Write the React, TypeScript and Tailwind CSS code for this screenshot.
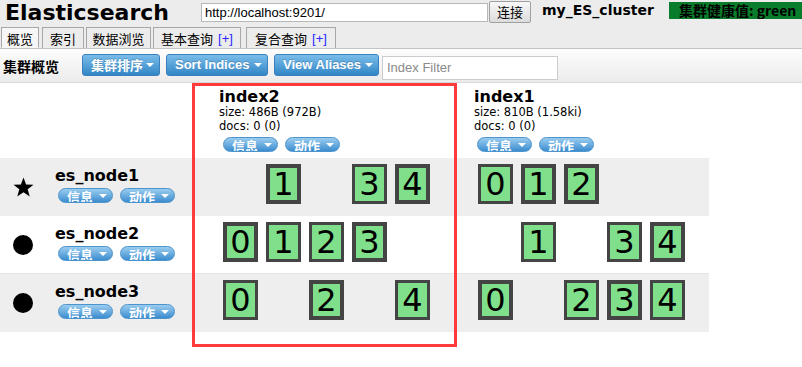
import React from "react";

const DV = "font-['DejaVu_Sans','Noto_Sans_CJK_SC',sans-serif]";
const LS = "font-['Liberation_Sans','Noto_Sans_CJK_SC',sans-serif]";
const CJK = "font-['Noto_Sans_CJK_SC',sans-serif]";

function Caret() {
  return (
    <span className="block w-0 h-0 border-x-[4px] border-x-transparent border-t-[4px] border-t-white" />
  );
}

function ToolButton({ label, w, cjk }: { label: string; w: string; cjk?: boolean }) {
  return (
    <div
      className={`h-[22px] ${w} shrink-0 rounded-[3px] border border-[#3a80bd] bg-gradient-to-b from-[#79bdea] to-[#3186c6] flex items-center justify-between pl-[8px] pr-[5px]`}
    >
      <span
        className={`${cjk ? CJK : LS} text-white font-bold text-[13px] leading-[16px] [text-shadow:0_-1px_0_rgba(0,0,0,0.2)]`}
      >
        {label}
      </span>
      <Caret />
    </div>
  );
}

function Pill({ label }: { label: string }) {
  return (
    <div className="h-[15px] w-[55px] shrink-0 rounded-full overflow-hidden border border-[#4d93cc] bg-gradient-to-b from-[#9acdef] to-[#3a8dcf] flex items-start pl-[8px]">
      <span className={`${CJK} text-white font-bold text-[13px] leading-[13px] mt-[1px]`}>{label}</span>
      <span className="ml-[6px] mt-[5px]">
        <Caret />
      </span>
    </div>
  );
}

type S = { n: number; p: boolean } | null;

function Shard({ s }: { s: S }) {
  if (!s) return <div className="w-[35px] h-[40px] shrink-0" />;
  return (
    <div
      className={`w-[35px] h-[40px] shrink-0 box-border ${s.p ? "border-4" : "border-[3px]"} border-[#444444] bg-[#80df8a] flex items-center justify-center ${DV} text-[32px] leading-none text-black`}
    >
      {s.n}
    </div>
  );
}

function slots(list: [number, boolean][]): S[] {
  const arr: S[] = [null, null, null, null, null];
  list.forEach(([n, p]) => (arr[n] = { n, p }));
  return arr;
}

const rows = [
  {
    name: "es_node1",
    icon: "star",
    bg: "bg-[#eeeeee]",
    i2: slots([[1, true], [3, false], [4, true]]),
    i1: slots([[0, false], [1, true], [2, true]]),
  },
  {
    name: "es_node2",
    icon: "dot",
    bg: "bg-white border-b border-[#e4e4e4]",
    i2: slots([[0, true], [1, false], [2, false], [3, true]]),
    i1: slots([[1, false], [3, false], [4, true]]),
  },
  {
    name: "es_node3",
    icon: "dot",
    bg: "bg-[#eeeeee]",
    i2: slots([[0, false], [2, true], [4, false]]),
    i1: slots([[0, true], [2, false], [3, true], [4, false]]),
  },
];

function Tab({ label, plus, w, active, ml }: { label: string; plus?: boolean; w: string; active?: boolean; ml: string }) {
  return (
    <div
      className={`${w} ${ml} h-[21px] shrink-0 border border-[#a8a8a8] ${active ? "border-b-[#f6f6f6] bg-[#f6f6f6]" : "border-b-0 bg-[#ececec]"} flex items-start justify-center pt-[3px] ${CJK} text-[13px] leading-[16px] text-black`}
    >
      <span>{label}</span>
      {plus && <span className={`${LS} text-[#2a2aff] ml-[5px]`}>[+]</span>}
    </div>
  );
}

function IndexHeader({ name, size, docs, pl, pillMl }: { name: string; size: string; docs: string; pl: string; pillMl: string }) {
  return (
    <div className={`${pl} pt-[5px] flex flex-col ${DV} text-black`}>
      <div className="font-bold text-[16px] leading-[17px]">{name}</div>
      <div className="text-[11.5px] leading-[14px]">{size}</div>
      <div className="text-[11.5px] leading-[14px]">{docs}</div>
      <div className={`flex gap-[7px] mt-[4px] ${pillMl}`}>
        <Pill label="信息" />
        <Pill label="动作" />
      </div>
    </div>
  );
}

export default function App() {
  return (
    <div className={`relative w-[802px] h-[367px] overflow-hidden bg-white ${DV}`}>
      {/* header */}
      <div className="h-[49px] bg-[#ececec] border-b border-[#c4c4c4] flex flex-col">
        <div className="h-[27px] flex items-start">
          <div className="w-[201px] shrink-0 pl-[5px] font-bold text-[22px] leading-[26px] text-black">Elasticsearch</div>
          <div className={`w-[287px] h-[19px] mt-[3px] shrink-0 bg-white border border-[#b8b8b8] ${LS} text-[13px] leading-[17px] pl-[3px] text-black`}>
            http://localhost:9201/
          </div>
          <div className={`w-[42px] h-[22px] ml-[1px] mt-[1px] shrink-0 border border-[#a0a0a0] rounded-[2px] bg-gradient-to-b from-[#f8f8f8] to-[#dcdcdc] flex items-center justify-center ${CJK} text-[13px] leading-[16px] text-black`}>
            连接
          </div>
          <div className="w-[138px] shrink-0 pl-[11px] mt-[1px] font-bold text-[14px] leading-[18px] text-black whitespace-nowrap">my_ES_cluster</div>
          <div className={`flex-1 min-w-0 h-[17px] mt-[2px] bg-[#0a7d2c] pl-[10px] ${CJK} font-bold text-[14px] leading-[17px] text-black whitespace-nowrap overflow-hidden`}>
            集群健康值: green
          </div>
        </div>
        <div className="h-[21px] flex items-end">
          <Tab label="概览" w="w-[38px]" ml="ml-[1px]" active />
          <Tab label="索引" w="w-[42px]" ml="ml-[3px]" />
          <Tab label="数据浏览" w="w-[65px]" ml="ml-[2px]" />
          <Tab label="基本查询" plus w="w-[88px]" ml="ml-[2px]" />
          <Tab label="复合查询" plus w="w-[90px]" ml="ml-[5px]" />
        </div>
      </div>

      {/* toolbar */}
      <div className="h-[34px] bg-gradient-to-b from-[#fdfdfd] to-[#ececec] border-b border-[#d8d8d8] flex items-start">
        <div className={`w-[82px] shrink-0 pl-[3px] mt-[9px] ${CJK} font-bold text-[14px] leading-[16px] text-black`}>集群概览</div>
        <div className="mt-[5px]">
          <ToolButton label="集群排序" w="w-[78px]" cjk />
        </div>
        <div className="mt-[5px] ml-[6px]">
          <ToolButton label="Sort Indices" w="w-[102px]" />
        </div>
        <div className="mt-[5px] ml-[6px]">
          <ToolButton label="View Aliases" w="w-[105px]" />
        </div>
        <div className={`ml-[3px] mt-[7px] w-[176px] h-[24px] shrink-0 bg-white border border-[#cccccc] pl-[4px] ${LS} text-[13px] leading-[22px] text-[#8a8a8a]`}>
          Index Filter
        </div>
      </div>

      {/* cluster table */}
      <div className="w-[709px] flex flex-col">
        <div className="h-[75px] flex">
          <div className="w-[214px] shrink-0" />
          <div className="w-[256px] shrink-0">
            <IndexHeader name="index2" size="size: 486B (972B)" docs="docs: 0 (0)" pl="pl-[5px]" pillMl="ml-[4px]" />
          </div>
          <div className="w-[239px] shrink-0">
            <IndexHeader name="index1" size="size: 810B (1.58ki)" docs="docs: 0 (0)" pl="pl-[4px]" pillMl="ml-[3px]" />
          </div>
        </div>
        {rows.map((r) => (
          <div key={r.name} className={`h-[58px] flex ${r.bg}`}>
            <div className="w-[214px] shrink-0 flex">
              <div className="w-[46px] shrink-0 flex items-center justify-center">
                {r.icon === "star" ? (
                  <svg width="21" height="20" viewBox="0 0 24 23">
                    <polygon points="12,0.5 15,8.6 23.5,8.8 16.8,14 19.2,22.5 12,17.5 4.8,22.5 7.2,14 0.5,8.8 9,8.6" fill="#000" />
                  </svg>
                ) : (
                  <div className="w-[20px] h-[20px] rounded-full bg-black" />
                )}
              </div>
              <div className="ml-[9px] pt-[10px] flex flex-col">
                <div className="font-bold text-[16px] leading-[16px] text-black">{r.name}</div>
                <div className="flex gap-[7px] mt-[4px] ml-[3px]">
                  <Pill label="信息" />
                  <Pill label="动作" />
                </div>
              </div>
            </div>
            <div className="w-[256px] shrink-0 pl-[9px] pt-[6px] flex gap-[8px]">
              {r.i2.map((s, i) => (
                <Shard key={i} s={s} />
              ))}
            </div>
            <div className="w-[239px] shrink-0 pl-[8px] pt-[6px] flex gap-[8px]">
              {r.i1.map((s, i) => (
                <Shard key={i} s={s} />
              ))}
            </div>
          </div>
        ))}
      </div>

      {/* red annotation rectangle */}
      <div className="absolute left-[192px] top-[83px] w-[265px] h-[264px] border-[3px] border-[#ff3b3b] pointer-events-none" />
    </div>
  );
}
